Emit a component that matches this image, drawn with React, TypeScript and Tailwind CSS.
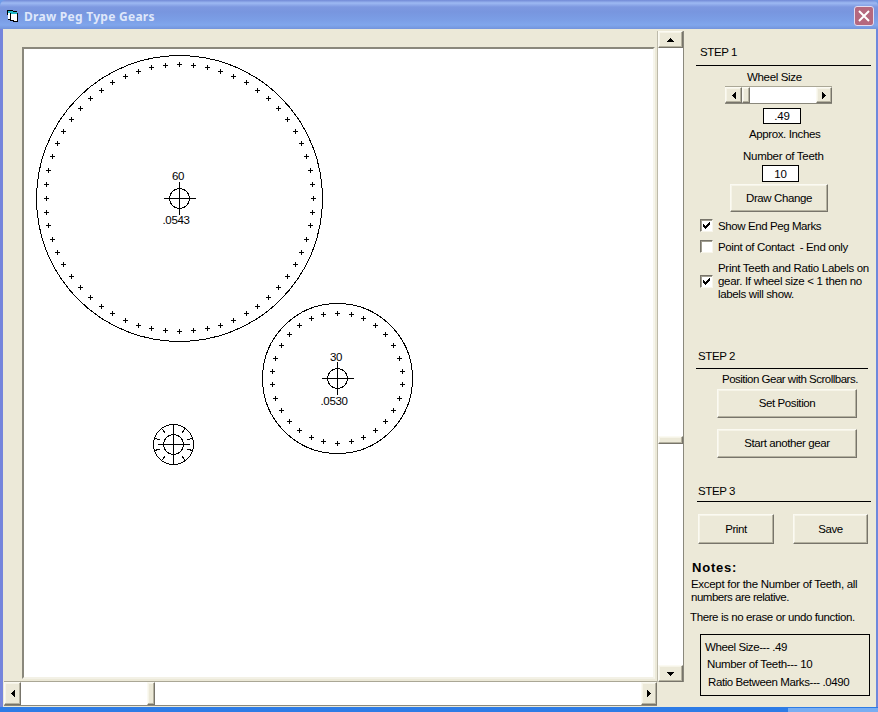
import React from "react";
import { clsx } from "clsx";

const RAISED =
  "bg-[#ece9d8] border border-t-[#fbfaf2] border-l-[#fbfaf2] border-r-[#77746a] border-b-[#77746a] shadow-[inset_-1px_-1px_0_#b5b2a0,inset_1px_1px_0_#f6f4e8]";

function Text({ className, children }: { className?: string; children: React.ReactNode }) {
  return <div className={clsx("h-[13px] whitespace-pre text-[11.5px] leading-[13px]", className)}>{children}</div>;
}

function Button({ className, children }: { className: string; children: React.ReactNode }) {
  return (
    <button className={clsx("flex items-center justify-center whitespace-nowrap text-[11.5px] leading-[13px] tracking-[-0.4px]", RAISED, className)}>
      {children}
    </button>
  );
}

const ARROWS = {
  up: "M0 4h7v-1h-1v-1h-1v-1h-1v-1h-1v1h-1v1h-1v1h-1z",
  down: "M0 0h7v1h-1v1h-1v1h-1v1h-1v-1h-1v-1h-1v-1h-1z",
  left: "M4 0v7h-1v-1h-1v-1h-1v-1h-1v-1h1v-1h1v-1h1v-1z",
  right: "M0 0v7h1v-1h1v-1h1v-1h1v-1h-1v-1h-1v-1h-1v-1z",
};

function Arrow({ dir, className }: { dir: keyof typeof ARROWS; className: string }) {
  const flat = dir === "up" || dir === "down";
  return (
    <div className={clsx("flex shrink-0 items-center justify-center", RAISED, className)}>
      <svg width={flat ? 7 : 4} height={flat ? 4 : 7} shapeRendering="crispEdges">
        <path d={ARROWS[dir]} />
      </svg>
    </div>
  );
}

function Check({ checked }: { checked?: boolean }) {
  return (
    <div className="flex size-[13px] shrink-0 items-center justify-center border border-t-[#77746a] border-l-[#77746a] border-r-[#f8f6ec] border-b-[#f8f6ec] bg-white shadow-[inset_1px_1px_0_#a19e90]">
      {checked && (
        <svg width="7" height="7" viewBox="0 0 7 7" shapeRendering="crispEdges">
          <path d="M0 2h1v1h1v1h1v-1h1v-1h1v-1h1v-1h1v3h-1v1h-1v1h-1v1h-1v1h-1v-1h-1v-1h-1z" />
        </svg>
      )}
    </div>
  );
}

type GearProps = {
  x: number;
  y: number;
  radius: number;
  pegRadius: number;
  teeth: number;
  ratio?: string;
  labelY?: number;
};

function Gear({ x, y, radius, pegRadius, teeth, ratio, labelY = 0 }: GearProps) {
  const marks = Array.from({ length: teeth }, (_, i) => {
    const a = (i * 2 * Math.PI) / teeth;
    const sx = Math.sin(a);
    const sy = -Math.cos(a);
    if (!ratio) return `M${x + sx * 14.5} ${y + sy * 14.5}L${x + sx * 20} ${y + sy * 20}`;
    const px = Math.floor(x + sx * pegRadius) + 0.5;
    const py = Math.floor(y - 0.4 + sy * pegRadius) + 0.5;
    return `M${px - 2.5} ${py}h5M${px} ${py - 2.5}v5`;
  }).join("");
  return (
    <g>
      <g fill="none" stroke="#000" shapeRendering="crispEdges">
        <circle cx={x} cy={y} r={radius} />
        <circle cx={x} cy={y} r={10} />
        <path d={`M${x - 16} ${y}h32.5M${x} ${y - 17}v33.5`} />
        <path d={marks} />
      </g>
      {ratio && (
        <g fontSize="11.5">
          <text x={x - 7.5} y={y - 18.5 + labelY} textLength="12.5">{teeth}</text>
          <text x={x - 17} y={y + 25.5 + labelY} textLength="27.5">{ratio}</text>
        </g>
      )}
    </g>
  );
}

function Drawing() {
  return (
    <svg width="629" height="629" viewBox="24 49 629 629" className="block">
      <Gear x={179.5} y={198.5} radius={143} pegRadius={133.5} teeth={60} ratio=".0543" />
      <Gear x={337.5} y={378.5} radius={75} pegRadius={65} teeth={30} ratio=".0530" labelY={1} />
      <Gear x={173.5} y={444.5} radius={20} pegRadius={18} teeth={10} />
    </svg>
  );
}

function TitleBar() {
  return (
    <header className="flex h-[29px] shrink-0 items-center rounded-t-[6px] bg-[linear-gradient(#7189d6_0px,#9db9f2_3px,#7d98e0_7px,#7896df_12px,#7b9ee6_20px,#80a6ec_25px,#7394dc_29px)] pl-[7px] pr-1">
      <svg width="11" height="12" viewBox="0 0 11 12" shapeRendering="crispEdges" className="mt-[2px]">
        <path d="M0 0h6v1h4v2h1v9h-5v-1h-3v-1h-2v-5h-1z" />
        <path d="M1 3h2v6h-2zM4 4h6v7h-3v-1h-3z" fill="#fff" />
        <path d="M1 1h5v1h4v2h-6v-1h-3z" fill="#20b8c8" />
      </svg>
      <h1 className="ml-1.5 mt-1 grow font-['Noto_Sans','Open_Sans',sans-serif] text-[12px] font-bold leading-4 tracking-[0.27px] text-[#dfe7fa]">Draw Peg Type Gears</h1>
      <button className="mt-0.5 flex size-5 items-center justify-center rounded-[3px] border border-[#e4dcf0] bg-[#b5687e]">
        <svg width="12" height="12" viewBox="0 0 12 12">
          <path d="M1 1l10 10M11 1L1 11" stroke="#fff" strokeWidth="2" />
        </svg>
      </button>
    </header>
  );
}

function Workspace() {
  return (
    <>
      <div className="w-[654px] pt-[18px]">
        <div className="ml-[19px] h-[632px] w-[633px] border-2 border-t-[#8a887c] border-l-[#8a887c] border-r-[#f6f5ec] border-b-[#f3f1e6] bg-white">
          <Drawing />
        </div>
        <div className="ml-px mt-[2px] flex h-[25px] w-[653px] border-y border-t-[#aaa796] border-b-[#8a887c] bg-white">
          <Arrow dir="left" className="w-[17px]" />
          <div className="w-[126px]" />
          <div className={clsx("w-[8px]", RAISED)} />
          <div className="grow" />
          <Arrow dir="right" className="w-[16px]" />
        </div>
      </div>
      <div className="mt-[2px] flex h-[651px] w-[27px] flex-col border-x border-l-[#bdbaaa] border-r-[#8a887c] bg-white">
        <Arrow dir="up" className="h-[17px]" />
        <div className="h-[388px]" />
        <div className={clsx("h-[8px]", RAISED)} />
        <div className="grow" />
        <Arrow dir="down" className="h-[17px]" />
      </div>
    </>
  );
}

function Panel() {
  return (
    <aside className="flex grow flex-col">
      <Text className="ml-4 mt-[17px] tracking-[-0.4px]">STEP 1</Text>
      <div className="ml-3 mt-[6px] h-px w-[175px] bg-black" />
      <Text className="ml-[63px] mt-[5px] tracking-[-0.34px]">Wheel Size</Text>
      <div className="ml-[41px] mt-[2px] flex h-[18px] w-[107px] border-y border-t-[#aaa796] border-b-[#8a887c] bg-white">
        <Arrow dir="left" className="w-[17px]" />
        <div className={clsx("w-[8px]", RAISED)} />
        <div className="grow" />
        <Arrow dir="right" className="w-4" />
      </div>
      <div className="ml-[79px] mt-[4px] flex h-4 w-[38px] items-center justify-center border border-black bg-white text-[11.5px] leading-3 tracking-[-0.2px]">.49</div>
      <Text className="ml-[65px] mt-[4px] tracking-[-0.39px]">Approx. Inches</Text>
      <Text className="ml-[59px] mt-[9px] tracking-[-0.28px]">Number of Teeth</Text>
      <div className="ml-[78px] mt-[2px] flex h-[17px] w-[37px] items-center justify-center border border-black bg-white text-[11.5px] leading-3 tracking-[-0.2px]">10</div>
      <Button className="ml-[46px] mt-[2px] h-[28px] w-[98px]">Draw Change</Button>
      <label className="ml-4 mt-[7px] flex h-[13px] gap-[5px]">
        <Check checked />
        <Text className="mt-px tracking-[-0.41px]">Show End Peg Marks</Text>
      </label>
      <label className="ml-4 mt-2 flex h-[13px] gap-[5px]">
        <Check />
        <Text className="mt-px tracking-[-0.36px]">{"Point of Contact  - End only"}</Text>
      </label>
      <label className="ml-4 mt-[9px] flex h-[39px] items-center gap-[5px]">
        <Check checked />
        <div>
          <Text className="tracking-[-0.3px]">Print Teeth and Ratio Labels on</Text>
          <Text className="tracking-[-0.3px]">{"gear. If wheel size < 1 then no"}</Text>
          <Text className="tracking-[-0.35px]">labels will show.</Text>
        </div>
      </label>
      <Text className="ml-[14px] mt-[49px] tracking-[-0.4px]">STEP 2</Text>
      <div className="ml-3 mt-[5px] h-px w-[172px] bg-black" />
      <Text className="ml-[38px] mt-[4px] tracking-[-0.5px]">Position Gear with Scrollbars.</Text>
      <Button className="ml-[33px] mt-[3px] h-[29px] w-[140px]">Set Position</Button>
      <Button className="ml-[33px] mt-[11px] h-[29px] w-[140px]">Start another gear</Button>
      <Text className="ml-[14px] mt-[27px] tracking-[-0.4px]">STEP 3</Text>
      <div className="ml-[13px] mt-[3px] h-px w-[174px] bg-black" />
      <div className="ml-[14px] mt-3 flex gap-[19px]">
        <Button className="h-[30px] w-[76px]">Print</Button>
        <Button className="h-[30px] w-[75px]">Save</Button>
      </div>
      <div className="ml-2 mt-4 h-4 text-[13px] font-bold leading-4 tracking-[0.8px]">Notes:</div>
      <Text className="ml-[7px] mt-[2px] tracking-[-0.3px]">Except for the Number of Teeth, all</Text>
      <Text className="ml-[7px] tracking-[-0.48px]">numbers are relative.</Text>
      <Text className="ml-[6px] mt-[7px] tracking-[-0.39px]">There is no erase or undo function.</Text>
      <div className="ml-4 mt-[10px] h-[62px] w-[170px] border border-black pt-[6px]">
        <Text className="ml-1 tracking-[-0.4px]">Wheel Size--- .49</Text>
        <Text className="ml-1.5 mt-[4px] tracking-[-0.33px]">Number of Teeth--- 10</Text>
        <Text className="ml-[7px] mt-[5px] tracking-[-0.41px]">Ratio Between Marks--- .0490</Text>
      </div>
    </aside>
  );
}

export default function App() {
  return (
    <div className="flex h-[712px] w-[878px] flex-col overflow-hidden bg-[#6f9be8] font-['Liberation_Sans',Arial,sans-serif] text-black">
      <TitleBar />
      <main className="flex h-[678px] shrink-0 border-l-[3px] border-r-2 border-l-[#7585dc] border-r-[#6e88dc] bg-[#ece9d8]">
        <Workspace />
        <Panel />
      </main>
      <div className="flex h-[5px] bg-[#2e7ce6]">
        <div className="ml-[788px] mt-px grow bg-[#79aef2]" />
      </div>
    </div>
  );
}
